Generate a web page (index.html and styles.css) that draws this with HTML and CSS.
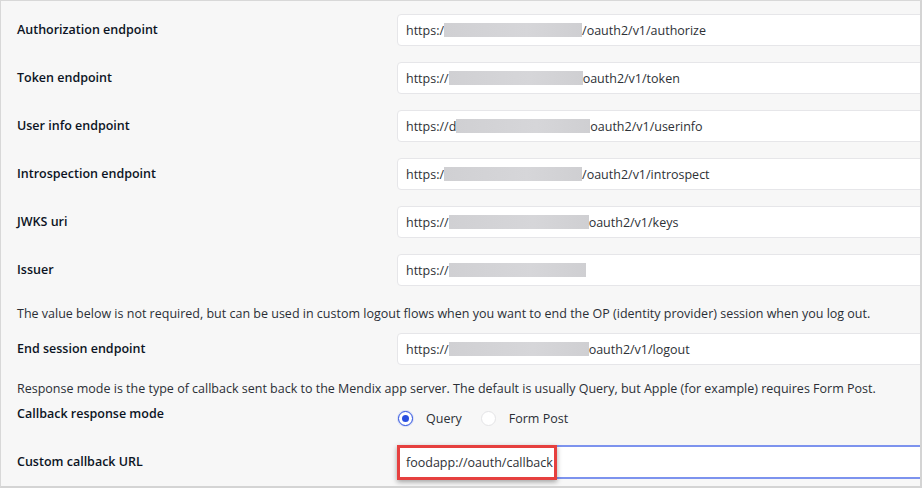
FILE: index.html
```html
<!DOCTYPE html>
<html lang="en">
<head>
<meta charset="utf-8">
<title>OIDC settings</title>
<link rel="stylesheet" href="styles.css">
</head>
<body>
<div class="frame">
  <div class="row">
    <div class="label">Authorization endpoint</div>
    <div class="input">https:/<span class="redact w138"></span>/oauth2/v1/authorize</div>
  </div>
  <div class="row">
    <div class="label">Token endpoint</div>
    <div class="input">https://<span class="redact w134"></span>oauth2/v1/token</div>
  </div>
  <div class="row">
    <div class="label">User info endpoint</div>
    <div class="input">https://d<span class="redact w134"></span>oauth2/v1/userinfo</div>
  </div>
  <div class="row">
    <div class="label">Introspection endpoint</div>
    <div class="input">https:/<span class="redact w138"></span>/oauth2/v1/introspect</div>
  </div>
  <div class="row">
    <div class="label">JWKS uri</div>
    <div class="input">https://<span class="redact w140"></span>oauth2/v1/keys</div>
  </div>
  <div class="row">
    <div class="label">Issuer</div>
    <div class="input">https://<span class="redact w137"></span></div>
  </div>
  <p class="note note-first">The value below is not required, but can be used in custom logout flows when you want to end the OP (identity provider) session when you log out.</p>
  <div class="row row-tight">
    <div class="label">End session endpoint</div>
    <div class="input">https://<span class="redact w140"></span>oauth2/v1/logout</div>
  </div>
  <p class="note">Response mode is the type of callback sent back to the Mendix app server. The default is usually Query, but Apple (for example) requires Form Post.</p>
  <div class="radio-row">
    <div class="label">Callback response mode</div>
    <div class="radios">
      <span class="radio checked"></span><span class="radio-text">Query</span>
      <span class="radio"></span><span class="radio-text">Form Post</span>
    </div>
  </div>
  <div class="row row-last">
    <div class="label">Custom callback URL</div>
    <div class="input focused">foodapp://oauth/callback<span class="caret"></span>
      <span class="highlight"></span>
    </div>
  </div>
</div>
</body>
</html>
```
FILE: styles.css
```css
* { box-sizing: border-box; }
html, body { margin: 0; padding: 0; }
body {
  width: 922px;
  height: 488px;
  overflow: hidden;
  background: #ffffff;
  font-family: "Open Sans", "Noto Sans", sans-serif;
  font-size: 12.5px;
  color: #1f2430;
}
.frame {
  width: 922px;
  height: 488px;
  background: #f7f7f7;
  border-top: 1px solid #d8d8d8;
  border-left: 1px solid #d8d8d8;
  border-right: 2px solid #d4d4d4;
  border-bottom: 2px solid #d4d4d4;
  padding: 5px 0 0 16px;
  overflow: hidden;
}
.row {
  display: grid;
  grid-template-columns: 380px 1fr;
  align-items: center;
  padding: 8px 0;
  margin-right: -12px;
}
.label {
  font-weight: 600;
  color: #0c1424;
  line-height: 20px;
}
.input {
  position: relative;
  height: 32px;
  background: #ffffff;
  border: 1px solid #e6e6e9;
  border-radius: 4px;
  padding: 0 8px;
  display: flex;
  align-items: center;
  color: #2e3136;
  white-space: nowrap;
}
.redact {
  display: inline-block;
  height: 14px;
  background: linear-gradient(90deg, #d0d0d3 0%, #d6d6d9 60%, #cfcfd2 100%);
}
.w134 { width: 134px; }
.w137 { width: 137px; }
.w138 { width: 138px; }
.w140 { width: 140px; }
.note {
  margin: 0;
  line-height: 20px;
  color: #2b2f36;
}
.note-first { margin-top: 10px; }
.note + .row-tight { margin-top: 1px; }
.row-tight + .note { margin-top: 6px; }
.radio-row {
  display: grid;
  grid-template-columns: 380px 1fr;
  align-items: center;
  margin-top: 5px;
  height: 25px;
}
.radio-row .label { align-self: start; }
.radios {
  display: flex;
  align-items: center;
  padding-left: 1px;
  margin-top: 3px;
}
.radio {
  width: 15px;
  height: 15px;
  border-radius: 50%;
  background: #ffffff;
  border: 1px solid #e4e4e6;
  display: inline-flex;
  align-items: center;
  justify-content: center;
}
.radio.checked {
  border: 1.5px solid #2a4fe0;
  box-shadow: 0 0 0 1px rgba(42, 79, 224, 0.15);
}
.radio.checked::after {
  content: "";
  width: 7px;
  height: 7px;
  border-radius: 50%;
  background: #2a4fe0;
}
.radio-text {
  margin-left: 13px;
  margin-right: 19px;
  color: #2b2f36;
}
.row-last { margin-top: 8px; }
.focused {
  border: 1px solid #7d93ee;
  border-top-width: 2px;
  border-bottom-width: 2px;
  border-radius: 0;
  height: 34px;
}
.caret {
  display: inline-block;
  width: 1px;
  height: 17px;
  background: #1a1a1a;
  margin-left: 2px;
}
.highlight {
  position: absolute;
  left: -1px;
  top: -2px;
  width: 160px;
  height: 35px;
  border: 3px solid #e6403f;
  box-shadow: 0 2px 5px rgba(0, 0, 0, 0.35);
}
```
